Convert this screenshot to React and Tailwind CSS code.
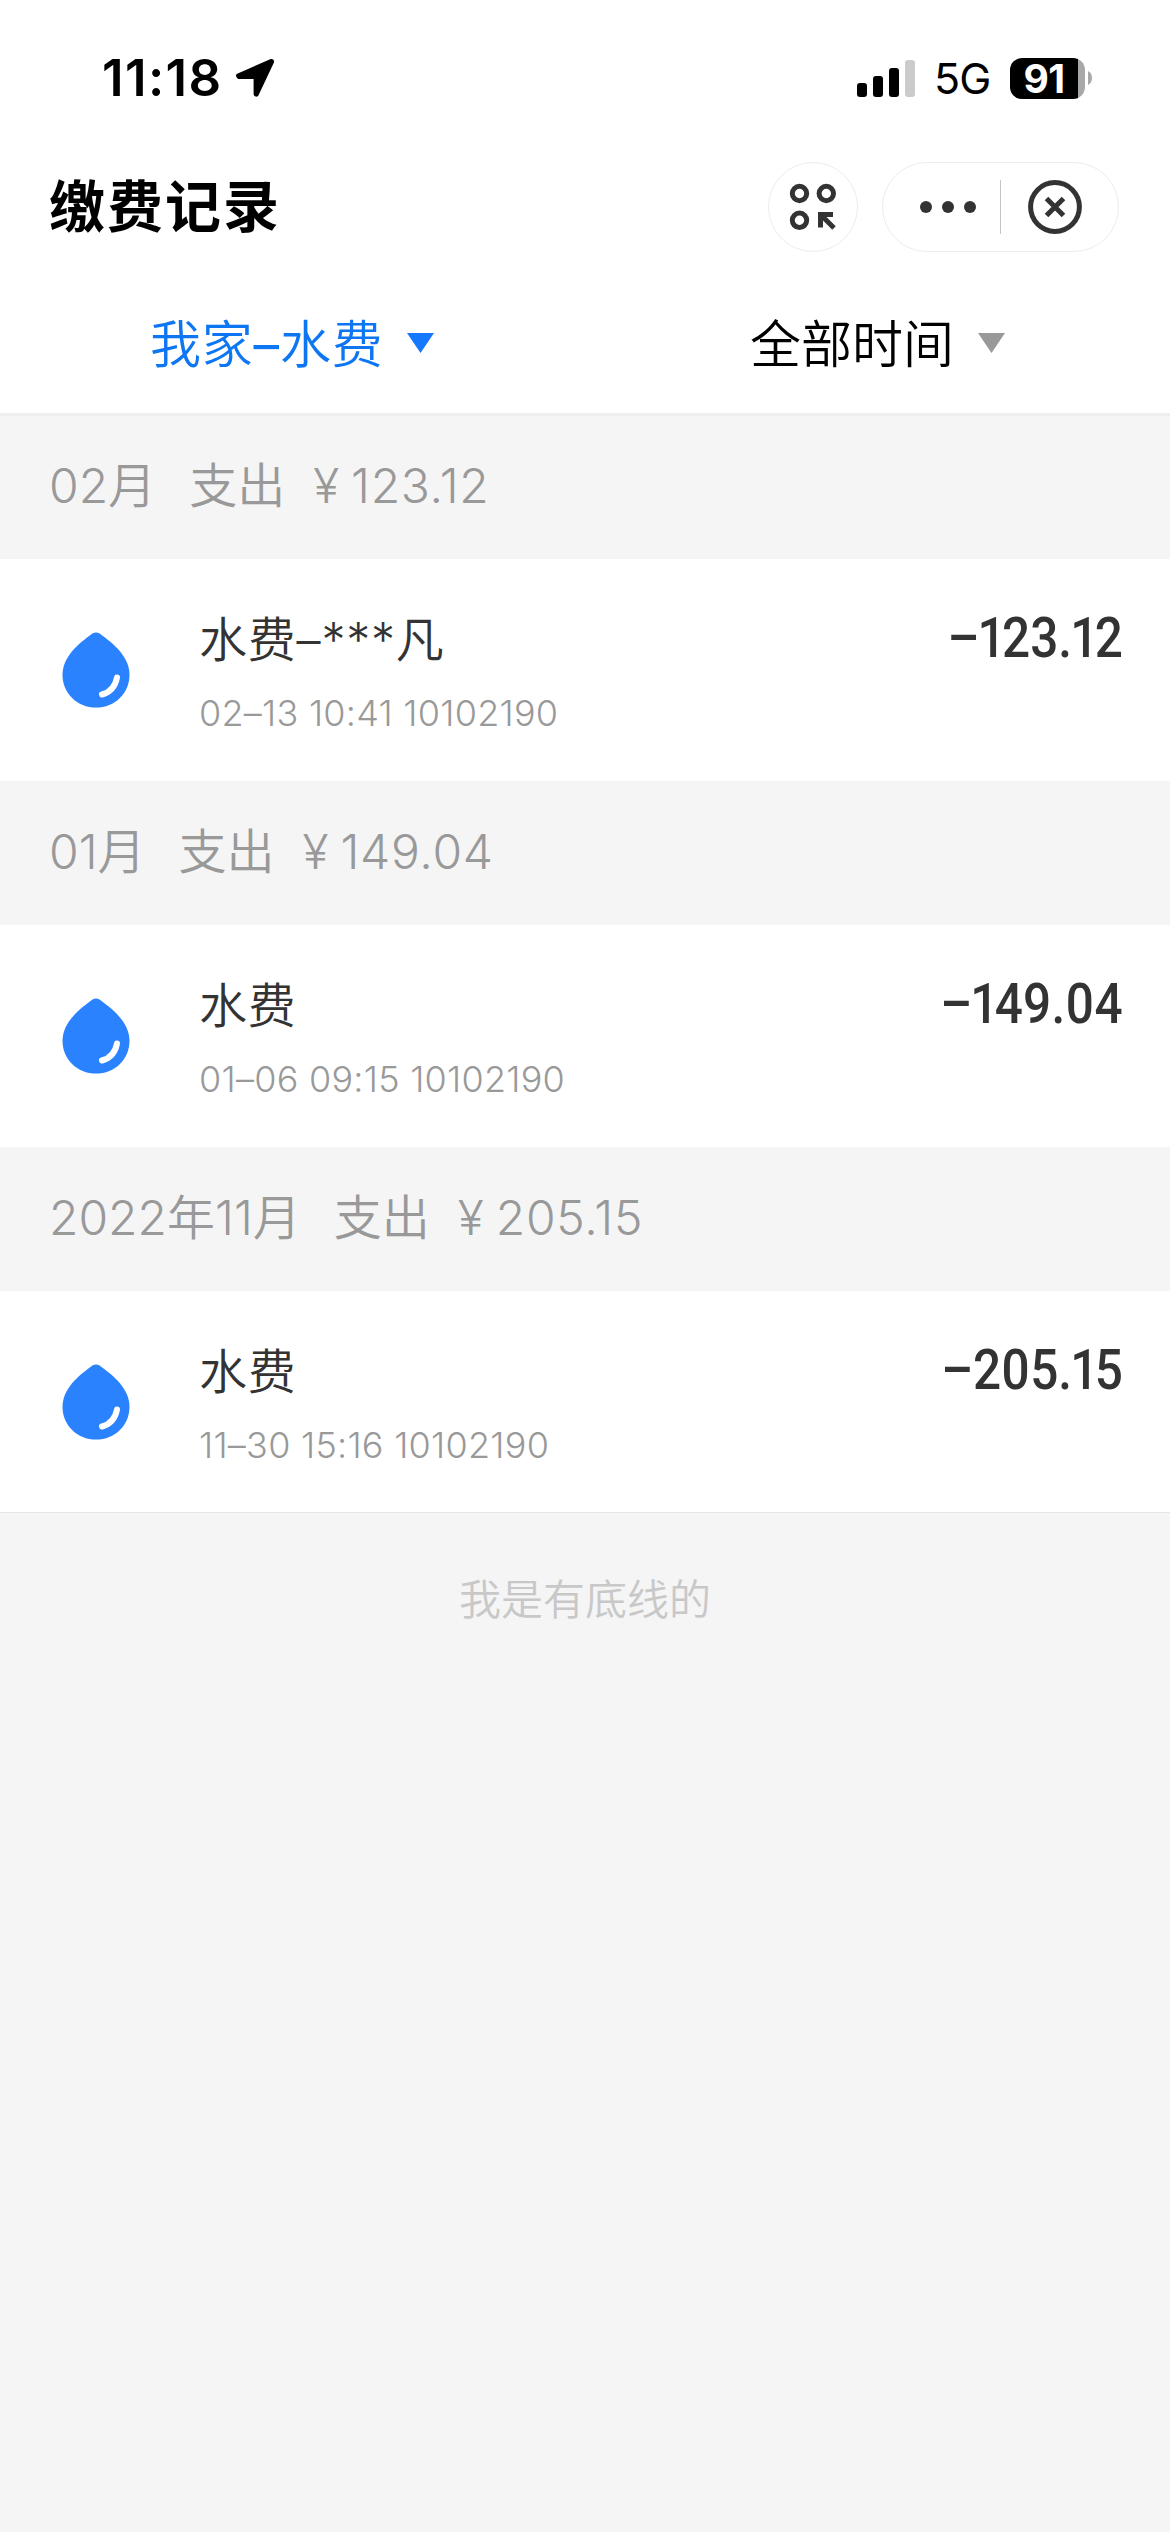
const groups = [
  {
    month: "02月",
    total: "123.12",
    items: [{ title: "水费–***凡", detail: "02–13 10:41 10102190", amount: "–123.12" }],
  },
  {
    month: "01月",
    total: "149.04",
    items: [{ title: "水费", detail: "01–06 09:15 10102190", amount: "–149.04" }],
  },
  {
    month: "2022年11月",
    total: "205.15",
    items: [{ title: "水费", detail: "11–30 15:16 10102190", amount: "–205.15" }],
  },
];

const StatusBar = () => (
  <div className="h-[150px] pt-[42px] pl-[102px] pr-[78px] flex justify-between items-start">
    <div className="flex items-center h-[72px]">
      <span className="text-[51px] leading-[72px] font-semibold tracking-[1.4px]">11:18</span>
      <svg className="w-10 h-10 ml-[12px]" viewBox="0 0 40 40">
        <path
          d="M36 3 L3 17.6 Q3.4 18.8 4 19 H20.6 V36 Q21 37 21.6 36.6 L37 4 Q37.4 2.6 36 3 Z"
          fill="#000"
          stroke="#000"
          strokeWidth="4"
          strokeLinejoin="round"
        />
      </svg>
    </div>

    <div className="flex items-center h-[72px]">
      <div className="flex items-end gap-1.5 h-[37px]">
        <span className="w-2.5 h-3.5 rounded-[3px] bg-black" />
        <span className="w-2.5 h-[21px] rounded-[3px] bg-black" />
        <span className="w-2.5 h-[29px] rounded-[3px] bg-black" />
        <span className="w-2.5 h-[37px] rounded-[3px] bg-[#cbcbcb]" />
      </div>
      <span className="ml-[19px] w-[76px] text-[43px] leading-[72px] font-normal tracking-[-1px]">5G</span>
      <div className="w-[75px] h-[41px] pr-[7px] rounded-[12px] bg-[linear-gradient(90deg,#000_68px,#a8a8a8_68px)] text-white text-[39px] leading-[41px] font-bold text-center tracking-[-0.5px]">
        91
      </div>
      <svg className="w-1 h-3.5 ml-[3px]" viewBox="0 0 4 14">
        <path d="M0 0 Q4 2 4 7 Q4 12 0 14 Z" fill="#a8a8a8" />
      </svg>
    </div>
  </div>
);

const TitleBar = () => (
  <div className="h-[114px] pl-[49px] pr-[51px] flex justify-between items-center">
    <h1 className="text-[56px] leading-[80px] font-semibold tracking-[2px]">缴费记录</h1>

    <div className="flex gap-6">
      <button className="w-[90px] h-[90px] rounded-full border border-[#ececec] flex items-center justify-center">
        <svg className="w-12 h-12" viewBox="0 0 48 48" fill="none" stroke="#333" strokeWidth="5">
          <circle cx="10.5" cy="10.5" r="7.2" />
          <circle cx="37.3" cy="10.5" r="7.2" />
          <circle cx="10.5" cy="37.3" r="7.2" />
          <path d="M31.5 44.5 V31.5 H44" />
          <path d="M32 32 L45 45" />
        </svg>
      </button>

      <div className="w-[237px] h-[90px] rounded-full border border-[#ececec] flex items-center">
        <button className="w-[117px] h-full flex items-center justify-center gap-2.5 pl-[12px]">
          <span className="w-3 h-3 rounded-full bg-[#333]" />
          <span className="w-3 h-3 rounded-full bg-[#333]" />
          <span className="w-3 h-3 rounded-full bg-[#333]" />
        </button>
        <span className="w-px h-[54px] bg-[#c4c4c4]" />
        <button className="ml-[27px]">
          <svg className="w-[54px] h-[54px]" viewBox="0 0 54 54" fill="none" stroke="#333" strokeWidth="5">
            <circle cx="27" cy="27" r="24.4" />
            <path d="M18.5 18.5 L35.5 35.5 M35.5 18.5 L18.5 35.5" />
          </svg>
        </button>
      </div>
    </div>
  </div>
);

const Caret = ({ className }) => (
  <svg className={className} viewBox="0 0 27 20">
    <path d="M0 0 H27 L13.5 20 Z" fill="currentColor" />
  </svg>
);

const Filters = () => (
  <div className="h-[152px] grid grid-cols-2 border-b-3 border-[#eeeeee] text-[51px] leading-[72px] font-[350]">
    <button className="flex items-center pl-[150px] pt-[12px] text-[#0d76f2] tracking-[0.8px]">
      <span>
        我家<span className="font-normal">–</span>水费
      </span>
      <Caret className="w-[27px] h-5 ml-[23px] mb-[4px] text-[#1677ff]" />
    </button>
    <button className="flex items-center pl-[165px] pt-[12px] text-black">
      全部时间
      <Caret className="w-[27px] h-5 ml-6 mb-[4px] text-[#999]" />
    </button>
  </div>
);

const WaterDrop = () => (
  <svg className="w-[68px] h-[76px]" viewBox="0 0 68 76">
    <path
      d="M30.5 1.6 Q34 -0.8 37.5 1.6 C52 12 67.5 25 67.5 43 C67.5 61 53 75.6 34 75.6 C15 75.6 0.5 61 0.5 43 C0.5 25 16 12 30.5 1.6 Z"
      fill="#2b82ff"
    />
    <path d="M55 45.5 Q52.5 59 40 62.5" fill="none" stroke="#fff" strokeWidth="6" strokeLinecap="round" />
  </svg>
);

const Record = ({ title, detail, amount }) => (
  <div className="h-[222px] bg-white flex pl-[62px] pr-[47px]">
    <div className="pt-[73px]">
      <WaterDrop />
    </div>
    <div className="ml-[69px] pt-[47px] flex-1">
      <p className="text-[48px] leading-[68px] font-[350] tracking-[0.8px] text-[#333]">{title}</p>
      <p className="mt-[14px] text-[36px] leading-[50px] font-[350] tracking-[0.25px] text-[#999]">{detail}</p>
    </div>
    <p className="pt-[44px] text-[55px] leading-[70px] font-medium proportional-nums text-[#333] font-[Roboto,sans-serif] origin-right scale-x-90">
      {amount}
    </p>
  </div>
);

const GroupHeader = ({ month, total }) => (
  <div className="h-[144px] pl-[49px] pb-[3px] flex items-center text-[48px] leading-[68px] font-[350] text-[#999]">
    <span>{month}</span>
    <span className="ml-[33px]">支出</span>
    <span className="ml-[28px]">¥</span>
    <span className="ml-[12px] tracking-[0.7px]">{total}</span>
  </div>
);

const App = () => {
  return (
    <div className="w-[1170px] h-[2532px] bg-[#f5f5f5] text-black font-[Inter,'Noto_Sans_CJK_SC',sans-serif]">
      <div className="bg-white">
        <StatusBar />
        <TitleBar />
        <Filters />
      </div>

      <div className="-mt-px">
        {groups.map((group) => (
          <section key={group.month}>
            <GroupHeader month={group.month} total={group.total} />
            {group.items.map((item) => (
              <Record key={item.detail} {...item} />
            ))}
          </section>
        ))}
      </div>

      <div className="-mt-px border-t border-[#e6e6e6] pt-[57px] text-center text-[42px] leading-[60px] font-[350] text-[#c8c8c8]">
        我是有底线的
      </div>
    </div>
  );
};

export default App;
